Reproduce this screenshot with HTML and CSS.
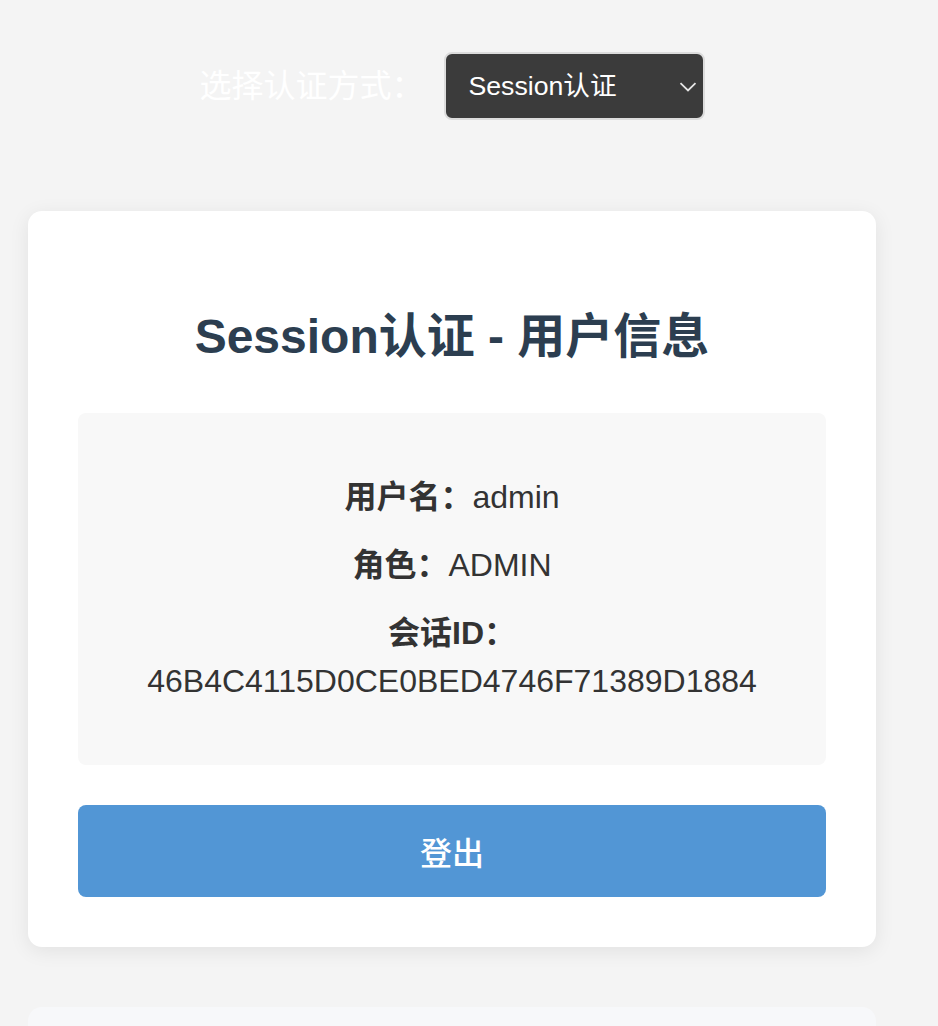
FILE: index.html
```html
<!DOCTYPE html>
<html lang="zh-CN">
<head>
<meta charset="utf-8">
<title>Session认证 - 用户信息</title>
<link rel="stylesheet" href="styles.css">
</head>
<body>
<div class="page">
  <div class="auth-switch">
    <label class="auth-label" for="auth">选择认证方式：</label>
    <div class="select-wrap">
      <select id="auth" class="auth-select">
        <option>Session认证</option>
        <option>JWT认证</option>
      </select>
      <svg class="chevron" width="18" height="10" viewBox="0 0 18 10"><path d="M1.5 1.2 L9 8.5 L16.5 1.2" fill="none" stroke="#e6e6e6" stroke-width="1.8"/></svg>
    </div>
  </div>

  <div class="card">
    <h2 class="card-title">Session认证 - 用户信息</h2>
    <div class="info">
      <p><strong>用户名：</strong>admin</p>
      <p><strong>角色：</strong>ADMIN</p>
      <p><strong>会话ID：</strong>46B4C4115D0CE0BED4746F71389D1884</p>
    </div>
    <button class="logout">登出</button>
  </div>

  <div class="card-next"></div>
</div>
</body>
</html>
```

FILE: styles.css
```css
html, body {
  margin: 0;
  padding: 0;
  background: #f4f4f4;
}
body {
  font-family: "Liberation Sans", "Noto Sans CJK SC", sans-serif;
  font-size: 32px;
  line-height: 48px;
  color: #333;
}
.page {
  width: 848px;
  margin-left: 28px;
  padding-top: 52px;
}
.auth-switch {
  display: flex;
  justify-content: center;
  align-items: center;
  gap: 20px;
}
.auth-label {
  color: #ffffff;
  font-size: 32px;
  line-height: 48px;
}
.select-wrap {
  position: relative;
  width: 261px;
  height: 68px;
}
.auth-select {
  appearance: none;
  -webkit-appearance: none;
  width: 261px;
  height: 68px;
  box-sizing: border-box;
  background: #3b3b3b;
  color: #fff;
  border: 2px solid #dcdcdc;
  border-radius: 8px;
  padding: 0 0 0 23px;
  font-family: "Liberation Sans", "Noto Sans CJK SC", sans-serif;
  font-size: 26.67px;
  outline: none;
}
.chevron {
  position: absolute;
  right: 8px;
  top: 30px;
  pointer-events: none;
}
.card {
  margin-top: 91px;
  background: #fff;
  border-radius: 14px;
  padding: 50px;
  box-shadow: 0 4px 20px rgba(0, 0, 0, 0.08);
}
.card-title {
  margin: 40px 0;
  text-align: center;
  font-size: 48px;
  line-height: 72px;
  font-weight: bold;
  color: #2c3e50;
}
.info {
  background: #f8f8f8;
  border-radius: 8px;
  padding: 40px;
  margin-bottom: 40px;
  text-align: center;
}
.info p {
  margin: 20px 0;
}
.info strong {
  font-weight: bold;
}
.logout {
  display: block;
  width: 100%;
  height: 92px;
  border: none;
  border-radius: 8px;
  background: #5296d5;
  color: #fff;
  font-family: "Liberation Sans", "Noto Sans CJK SC", sans-serif;
  font-size: 32px;
  font-weight: 500;
}
.card-next {
  margin-top: 60px;
  height: 19px;
  background: #f7f8fa;
  border-radius: 14px 14px 0 0;
}
```
